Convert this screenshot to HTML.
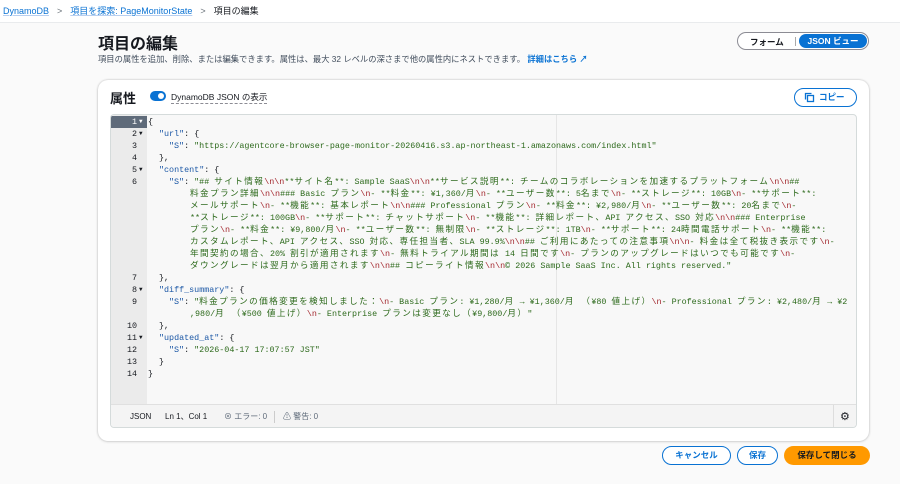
<!DOCTYPE html>
<html><head><meta charset="utf-8"><style>
*{box-sizing:border-box;margin:0;padding:0}
body{width:900px;height:484px;background:#fafafa;font-family:"Liberation Sans","Noto Sans CJK JP",sans-serif;color:#16191f;position:relative;overflow:hidden}
.bc{position:absolute;left:0;top:0;width:900px;height:23px;border-bottom:1px solid #e9ebed;font-size:9px;line-height:23px;padding-left:3px;background:#fff}
.bc a{color:#0972d3;text-decoration:underline;text-decoration-color:#b8cff0}
.bc .s{color:#687078;margin:0 8px}
h1{position:absolute;left:98px;top:30px;font-size:16px;font-weight:bold}
.desc{position:absolute;left:98px;top:53px;font-size:8.3px;color:#414d5c}
.desc a{color:#0972d3;font-weight:bold;text-decoration:none}
.seg{position:absolute;left:737px;top:32px;width:132px;height:18px;border:1px solid #8c8c94;border-radius:9px;background:#fff;font-size:8.5px;font-weight:bold}
.seg .f{position:absolute;left:12px;top:3px;color:#16191f}
.seg .j{position:absolute;left:61px;top:1px;width:68px;height:14px;border-radius:7px;background:#0972d3;color:#fff;text-align:center;line-height:14px}
.card{position:absolute;left:98px;top:80px;width:771px;height:361px;background:#fff;border-radius:10px;box-shadow:0 0 2px rgba(0,0,0,.25),0 1px 3px rgba(0,0,0,.08)}
.ct{position:absolute;left:12px;top:8px;font-size:13px;font-weight:bold}
.tg{position:absolute;left:52px;top:11px;width:16px;height:10px;border-radius:5px;background:#0972d3}
.tg:after{content:"";position:absolute;right:2px;top:2px;width:6px;height:6px;border-radius:50%;background:#fff}
.tl{position:absolute;left:73px;top:11px;font-size:8.5px;border-bottom:1px dashed #8c8c94}
.cp{position:absolute;left:696px;top:8px;width:63px;height:19px;border:1.5px solid #0972d3;border-radius:10px;color:#0972d3;font-size:8.5px;font-weight:bold;line-height:16px;padding-left:24px}
.ed{position:absolute;left:12px;top:34px;width:747px;height:314px;border:1px solid #d5dbdb;border-radius:4px;background:#f8f8f8;overflow:hidden}
.gut{position:absolute;left:0;top:0;width:36px;height:289px;background:#ebebeb}
.code{position:absolute;left:0;top:0;font-family:"Liberation Mono","Noto Sans CJK JP",monospace;font-size:8.4px;white-space:pre;color:#16191f}
.c{font-size:8.6px;letter-spacing:1.4px}
.r{position:absolute;height:12px;line-height:12px}
.n{position:absolute;width:26px;text-align:right;left:0}
.ar{position:absolute;left:28px;font-size:6px}
.k{color:#1c58a6}.s{color:#2d6a1c}.e{color:#a3272d}
.sb{position:absolute;left:0;top:289px;width:747px;height:25px;border-top:1px solid #e0e0e0;background:#f4f4f4;font-size:8px;line-height:24px;color:#16191f}
.btn{position:absolute;top:446px;height:19px;border-radius:10px;font-size:8.5px;font-weight:bold;text-align:center;line-height:16px}
.o{border:1.5px solid #0972d3;color:#0972d3;background:#fff}
</style></head><body>
<div class="bc"><a>DynamoDB</a><span class="s">&gt;</span><a>項目を探索: PageMonitorState</a><span class="s">&gt;</span>項目の編集</div>
<h1>項目の編集</h1>
<div class="desc">項目の属性を追加、削除、または編集できます。属性は、最大 32 レベルの深さまで他の属性内にネストできます。 <a>詳細はこちら ↗</a></div>
<div class="seg"><span class="f">フォーム</span><span style="position:absolute;left:57px;top:4px;width:1px;height:9px;background:#aaa"></span><span class="j">JSON ビュー</span></div>
<div class="card">
<div class="ct">属性</div><div class="tg"></div><div class="tl">DynamoDB JSON の表示</div>
<div class="cp"><svg style="position:absolute;left:9px;top:3px" width="11" height="11" viewBox="0 0 11 11" fill="none" stroke="#0972d3" stroke-width="1.3"><rect x="3.5" y="3.5" width="6" height="6"/><path d="M1.5 7.5V1.5h6"/></svg>コピー</div>
<div class="ed"><div class="gut"></div>
<div style="position:absolute;left:0;top:1px;width:36px;height:12px;background:#5f6b7a"></div>
<div style="position:absolute;left:445px;top:0;width:1px;height:289px;background:#e6e6e6"></div>
<div class="code">
<div class="r" style="top:1px;width:747px"><span class="n" style="color:#fff">1</span><span class="ar" style="color:#fff">▼</span><span style="position:absolute;left:37px">{</span></div>
<div class="r" style="top:13px"><span class="n">2</span><span class="ar">▼</span><span style="position:absolute;left:48px"><span class="k">"url"</span>: {</span></div>
<div class="r" style="top:25px"><span class="n">3</span><span style="position:absolute;left:58px"><span class="k">"S"</span>: <span class="s">"https://agentcore-browser-page-monitor-20260416.s3.ap-northeast-1.amazonaws.com/index.html"</span></span></div>
<div class="r" style="top:37px"><span class="n">4</span><span style="position:absolute;left:48px">},</span></div>
<div class="r" style="top:49px"><span class="n">5</span><span class="ar">▼</span><span style="position:absolute;left:48px"><span class="k">"content"</span>: {</span></div>
<div class="r" style="top:61px"><span class="n">6</span><span style="position:absolute;left:58px"><span class="k">"S"</span>: <span class="s">"## <span class="c">サイト情報</span><span class="e">\n\n</span>**<span class="c">サイト名</span>**: Sample SaaS<span class="e">\n\n</span>**<span class="c">サービス説明</span>**: <span class="c">チームのコラボレーションを加速するプラットフォーム</span><span class="e">\n\n</span>##</span></span></div>
<div class="r s" style="top:73px;left:79px"><span class="c">料金プラン詳細</span><span class="e">\n\n</span>### Basic <span class="c">プラン</span><span class="e">\n</span>- **<span class="c">料金</span>**: ¥1,360/<span class="c">月</span><span class="e">\n</span>- **<span class="c">ユーザー数</span>**: 5<span class="c">名まで</span><span class="e">\n</span>- **<span class="c">ストレージ</span>**: 10GB<span class="e">\n</span>- **<span class="c">サポート</span>**:</div>
<div class="r s" style="top:85px;left:79px"><span class="c">メールサポート</span><span class="e">\n</span>- **<span class="c">機能</span>**: <span class="c">基本レポート</span><span class="e">\n\n</span>### Professional <span class="c">プラン</span><span class="e">\n</span>- **<span class="c">料金</span>**: ¥2,980/<span class="c">月</span><span class="e">\n</span>- **<span class="c">ユーザー数</span>**: 20<span class="c">名まで</span><span class="e">\n</span>-</div>
<div class="r s" style="top:97px;left:79px">**<span class="c">ストレージ</span>**: 100GB<span class="e">\n</span>- **<span class="c">サポート</span>**: <span class="c">チャットサポート</span><span class="e">\n</span>- **<span class="c">機能</span>**: <span class="c">詳細レポート、</span>API <span class="c">アクセス、</span>SSO <span class="c">対応</span><span class="e">\n\n</span>### Enterprise</div>
<div class="r s" style="top:109px;left:79px"><span class="c">プラン</span><span class="e">\n</span>- **<span class="c">料金</span>**: ¥9,800/<span class="c">月</span><span class="e">\n</span>- **<span class="c">ユーザー数</span>**: <span class="c">無制限</span><span class="e">\n</span>- **<span class="c">ストレージ</span>**: 1TB<span class="e">\n</span>- **<span class="c">サポート</span>**: 24<span class="c">時間電話サポート</span><span class="e">\n</span>- **<span class="c">機能</span>**:</div>
<div class="r s" style="top:121px;left:79px"><span class="c">カスタムレポート、</span>API <span class="c">アクセス、</span>SSO <span class="c">対応、専任担当者、</span>SLA 99.9%<span class="e">\n\n</span>## <span class="c">ご利用にあたっての注意事項</span><span class="e">\n\n</span>- <span class="c">料金は全て税抜き表示です</span><span class="e">\n</span>-</div>
<div class="r s" style="top:133px;left:79px"><span class="c">年間契約の場合、</span>20% <span class="c">割引が適用されます</span><span class="e">\n</span>- <span class="c">無料トライアル期間は</span> 14 <span class="c">日間です</span><span class="e">\n</span>- <span class="c">プランのアップグレードはいつでも可能です</span><span class="e">\n</span>-</div>
<div class="r s" style="top:145px;left:79px"><span class="c">ダウングレードは翌月から適用されます</span><span class="e">\n\n</span>## <span class="c">コピーライト情報</span><span class="e">\n\n</span>© 2026 Sample SaaS Inc. All rights reserved."</div>
<div class="r" style="top:157px"><span class="n">7</span><span style="position:absolute;left:48px">},</span></div>
<div class="r" style="top:169px"><span class="n">8</span><span class="ar">▼</span><span style="position:absolute;left:48px"><span class="k">"diff_summary"</span>: {</span></div>
<div class="r" style="top:181px"><span class="n">9</span><span style="position:absolute;left:58px"><span class="k">"S"</span>: <span class="s">"<span class="c">料金プランの価格変更を検知しました：</span><span class="e">\n</span>- Basic <span class="c">プラン</span>: ¥1,280/<span class="c">月</span> → ¥1,360/<span class="c">月 （</span>¥80 <span class="c">値上げ）</span><span class="e">\n</span>- Professional <span class="c">プラン</span>: ¥2,480/<span class="c">月</span> → ¥2</span></span></div>
<div class="r s" style="top:193px;left:79px">,980/<span class="c">月 （</span>¥500 <span class="c">値上げ）</span><span class="e">\n</span>- Enterprise <span class="c">プランは変更なし（</span>¥9,800/<span class="c">月）</span>"</div>
<div class="r" style="top:205px"><span class="n">10</span><span style="position:absolute;left:48px">},</span></div>
<div class="r" style="top:217px"><span class="n">11</span><span class="ar">▼</span><span style="position:absolute;left:48px"><span class="k">"updated_at"</span>: {</span></div>
<div class="r" style="top:229px"><span class="n">12</span><span style="position:absolute;left:58px"><span class="k">"S"</span>: <span class="s">"2026-04-17 17:07:57 JST"</span></span></div>
<div class="r" style="top:241px"><span class="n">13</span><span style="position:absolute;left:48px">}</span></div>
<div class="r" style="top:253px"><span class="n">14</span><span style="position:absolute;left:37px">}</span></div>
</div>
<div class="sb"><span style="position:absolute;left:19px">JSON</span><span style="position:absolute;left:54px">Ln 1、Col 1</span><span style="position:absolute;left:113px;color:#5f6b7a">⊗ エラー: 0</span><span style="position:absolute;left:163px;top:6px;width:1px;height:12px;background:#ccc"></span><span style="position:absolute;left:172px;color:#5f6b7a">⚠ 警告: 0</span><span style="position:absolute;left:722px;top:0;width:1px;height:24px;background:#ddd"></span><span style="position:absolute;left:729px;font-size:11px">⚙</span></div>
</div>
</div>
<div class="btn o" style="left:662px;width:69px">キャンセル</div>
<div class="btn o" style="left:737px;width:41px">保存</div>
<div class="btn" style="left:784px;width:86px;background:#ff9900;color:#16191f;line-height:19px">保存して閉じる</div>
</body></html>
